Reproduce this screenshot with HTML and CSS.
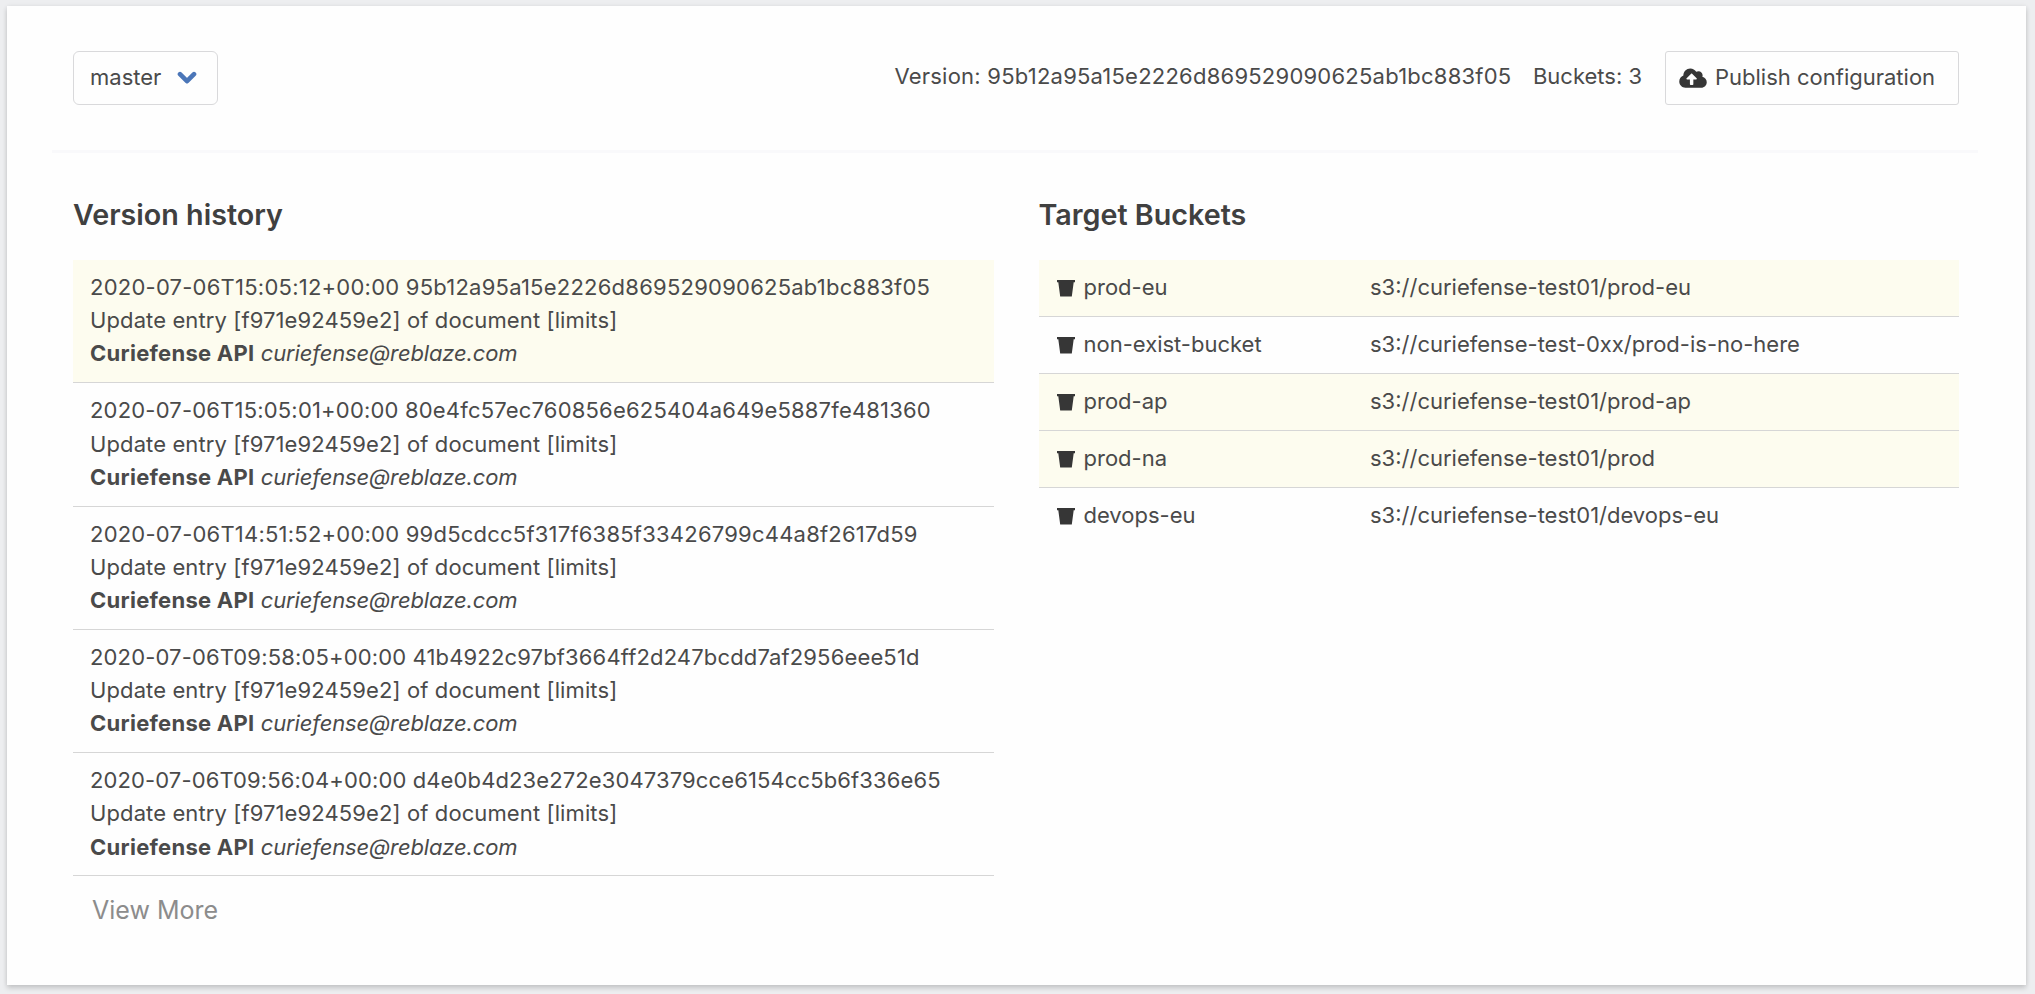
FILE: index.html
```html
<!DOCTYPE html>
<html lang="en">
<head>
<meta charset="utf-8">
<title>Publish configuration</title>
<link rel="stylesheet" href="styles.css">
</head>
<body>
<main class="card">
  <header class="toolbar">
    <button class="branch">master
      <svg class="chevron" viewBox="0 0 20 14"><path d="M3 3.2 10 10.2 17 3.2"/></svg>
    </button>
    <div class="summary">
      <span class="version">Version: 95b12a95a15e2226d869529090625ab1bc883f05</span>
      <span class="count">Buckets: 3</span>
      <button class="publish">
        <svg class="cloud" viewBox="0 0 640 512"><path d="M537.600 226.600c4.100-10.700 6.400-22.400 6.400-34.600 0-53-43-96-96-96-19.700 0-38.100 6-53.300 16.200C367 64.200 315.300 32 256 32c-88.400 0-160 71.600-160 160 0 2.700.1 5.400.2 8.100C40.200 219.800 0 273.200 0 336c0 79.500 64.500 144 144 144h368c70.700 0 128-57.300 128-128 0-61.900-44-113.600-102.400-125.400zM393.400 288H328v112c0 8.800-7.200 16-16 16h-48c-8.800 0-16-7.200-16-16V288h-65.400c-14.300 0-21.400-17.200-11.300-27.300l105.400-105.400c6.200-6.200 16.400-6.200 22.600 0l105.400 105.400c10.100 10.100 2.900 27.300-11.300 27.300z"/></svg>
        <span>Publish configuration</span>
      </button>
    </div>
  </header>
  <div class="divider"></div>
  <div class="columns">
    <section class="column">
      <h2 class="title">Version history</h2>
      <ul class="list">
        <li class="entry active"><p class="hash loosest">2020-07-06T15:05:12+00:00 95b12a95a15e2226d869529090625ab1bc883f05</p><p class="note">Update entry [f971e92459e2] of document [limits]</p><p><strong>Curiefense API</strong> <em>curiefense@reblaze.com</em></p></li>
        <li class="entry"><p class="hash loose">2020-07-06T15:05:01+00:00 80e4fc57ec760856e625404a649e5887fe481360</p><p class="note">Update entry [f971e92459e2] of document [limits]</p><p><strong>Curiefense API</strong> <em>curiefense@reblaze.com</em></p></li>
        <li class="entry"><p class="hash looser">2020-07-06T14:51:52+00:00 99d5cdcc5f317f6385f33426799c44a8f2617d59</p><p class="note">Update entry [f971e92459e2] of document [limits]</p><p><strong>Curiefense API</strong> <em>curiefense@reblaze.com</em></p></li>
        <li class="entry"><p class="hash snug">2020-07-06T09:58:05+00:00 41b4922c97bf3664ff2d247bcdd7af2956eee51d</p><p class="note">Update entry [f971e92459e2] of document [limits]</p><p><strong>Curiefense API</strong> <em>curiefense@reblaze.com</em></p></li>
        <li class="entry"><p class="hash">2020-07-06T09:56:04+00:00 d4e0b4d23e272e3047379cce6154cc5b6f336e65</p><p class="note">Update entry [f971e92459e2] of document [limits]</p><p><strong>Curiefense API</strong> <em>curiefense@reblaze.com</em></p></li>
      </ul>
      <a class="more">View More</a>
    </section>
    <section class="column">
      <h2 class="title">Target Buckets</h2>
      <ul class="list">
        <li class="bucket active"><svg class="pail" viewBox="0 0 18 17"><path d="M0 0H18V2.200H16.700L14.800 16.500H3.200L1.300 2.200H0Z"/></svg><span class="name">prod-eu</span><span>s3://curiefense-test01/prod-eu</span></li>
        <li class="bucket"><svg class="pail" viewBox="0 0 18 17"><path d="M0 0H18V2.200H16.700L14.800 16.500H3.200L1.300 2.200H0Z"/></svg><span class="name">non-exist-bucket</span><span>s3://curiefense-test-0xx/prod-is-no-here</span></li>
        <li class="bucket active"><svg class="pail" viewBox="0 0 18 17"><path d="M0 0H18V2.200H16.700L14.800 16.500H3.200L1.300 2.200H0Z"/></svg><span class="name">prod-ap</span><span>s3://curiefense-test01/prod-ap</span></li>
        <li class="bucket active"><svg class="pail" viewBox="0 0 18 17"><path d="M0 0H18V2.200H16.700L14.800 16.500H3.200L1.300 2.200H0Z"/></svg><span class="name">prod-na</span><span>s3://curiefense-test01/prod</span></li>
        <li class="bucket"><svg class="pail" viewBox="0 0 18 17"><path d="M0 0H18V2.200H16.700L14.800 16.500H3.200L1.300 2.200H0Z"/></svg><span class="name">devops-eu</span><span>s3://curiefense-test01/devops-eu</span></li>
      </ul>
    </section>
  </div>
</main>
</body>
</html>
```
FILE: styles.css
```css
* { box-sizing: border-box; margin: 0; padding: 0; }
body {
  height: 994px;
  padding: 6px 9px 9px 7px;
  overflow: hidden;
  background: #edeef0;
  color: #4a4a4a;
  font: 22px/33.2px Inter, "Liberation Sans", sans-serif;
}
.card {
  height: 979px;
  padding: 45px 67px 0 66px;
  background: #fefefe;
  box-shadow: 0 3px 5px rgba(10, 10, 10, .17), 0 0 5px rgba(10, 10, 10, .06);
}
.toolbar { display: flex; justify-content: space-between; height: 54px; }
button {
  display: flex;
  align-items: center;
  height: 54px;
  border: 1.500px solid #d9d9db;
  background: #fefefe;
  color: #4a4a4a;
  font: inherit;
}
.branch { width: 145px; padding: 0 20px 0 16px; justify-content: space-between; border-radius: 6px; }
.chevron { width: 20px; height: 14px; fill: none; stroke: #4b76b8; stroke-width: 4.600; stroke-linecap: round; stroke-linejoin: round; }
.summary { display: flex; white-space: nowrap; }
.version, .count { padding-top: 9px; }
.version { margin-right: 21.500px; letter-spacing: .23px; }
.count { margin-right: 23px; }
.publish { width: 294px; padding-left: 13px; gap: 8px; border-radius: 3px; }
.cloud { width: 28px; height: 22px; fill: #363636; }
.divider { height: 3px; margin: 45px -19px 0 -21px; background: #f9f9fb; }
.columns { display: flex; gap: 45px; padding-top: 42px; }
.column { flex: 1; min-width: 0; }
.title { height: 65px; font-size: 28.700px; line-height: 40px; font-weight: 600; color: #404040; }
.list { list-style: none; }
.entry { height: 123.300px; padding: 11px 17px; border-bottom: 1.600px solid #d6d6d6; white-space: nowrap; }
.hash { letter-spacing: .118px; }
.snug { letter-spacing: .147px; }
.loose { letter-spacing: .187px; }
.looser { letter-spacing: .22px; }
.loosest { letter-spacing: .236px; }
.note { letter-spacing: .11px; }
.bucket { display: flex; align-items: center; height: 57px; padding: 0 18px; border-bottom: 1.600px solid #d6d6d6; }
.bucket:last-child { border-bottom-color: transparent; }
.active { background: #fdfcef; }
.pail { width: 18px; height: 17px; margin-right: 9px; fill: #363636; }
.name { width: 286.500px; }
strong { font-weight: 700; letter-spacing: .27px; }
em { letter-spacing: -.14px; }
.more { display: block; padding: 15px 19px; font-size: 25px; line-height: 38px; color: #8c8c8c; }
```
